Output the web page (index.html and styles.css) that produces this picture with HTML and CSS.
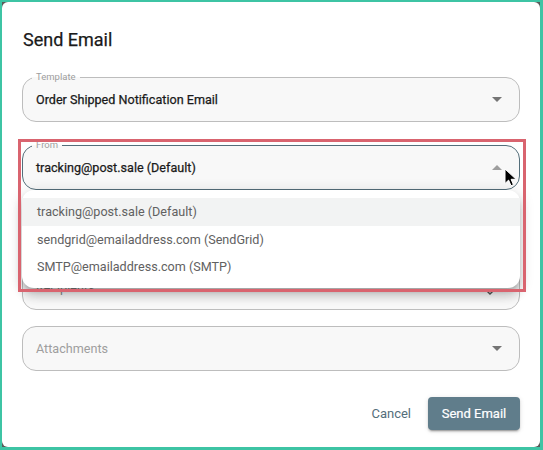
FILE: index.html
```html
<!DOCTYPE html>
<html>
<head>
<meta charset="utf-8">
<link rel="stylesheet" href="styles.css">
</head>
<body>
<div class="frame">
  <div class="dialog">
    <h1 class="title">Send Email</h1>

    <div class="field field-template">
      <span class="label">Template</span>
      <span class="value">Order Shipped Notification Email</span>
      <svg class="arrow" width="10" height="5" viewBox="0 0 10 5"><path d="M0 0h10L5 5z" fill="#757575"/></svg>
    </div>

    <div class="field field-from focused">
      <span class="label">From</span>
      <span class="value">tracking@post.sale (Default)</span>
      <svg class="arrow" width="10" height="5" viewBox="0 0 10 5"><path d="M0 5h10L5 0z" fill="#9e9e9e"/></svg>
    </div>

    <div class="field field-to"></div>

    <div class="field field-recipient">
      <span class="placeholder">Recipients</span>
      <svg class="unfold" width="16" height="16" viewBox="0 0 24 24"><path d="M12 5.83 15.17 9l1.41-1.41L12 3 7.41 7.59 8.83 9zm0 12.34L8.83 15l-1.41 1.41L12 21l4.59-4.59L15.17 15z" fill="#555"/></svg>
    </div>

    <div class="field field-attach">
      <span class="placeholder">Attachments</span>
      <svg class="arrow" width="10" height="5" viewBox="0 0 10 5"><path d="M0 0h10L5 5z" fill="#757575"/></svg>
    </div>

    <div class="actions">
      <button class="btn btn-text">Cancel</button>
      <button class="btn btn-primary">Send Email</button>
    </div>

    <ul class="menu">
      <li class="menu-item active">tracking@post.sale (Default)</li>
      <li class="menu-item">sendgrid@emailaddress.com (SendGrid)</li>
      <li class="menu-item">SMTP@emailaddress.com (SMTP)</li>
    </ul>

    <div class="highlight"></div>

    <svg class="cursor" width="13" height="19" viewBox="0 0 13 19"><path d="M1 1v14.5l3.6-3.4 2.4 5.6 2.4-1-2.3-5.4h5z" fill="#000" stroke="#fff" stroke-width="1" stroke-linejoin="round"/></svg>
  </div>
</div>
</body>
</html>
```

FILE: styles.css
```css
* { box-sizing: border-box; }
html, body { margin: 0; padding: 0; }
body {
  width: 543px;
  height: 450px;
  font-family: Roboto, "Noto Sans", sans-serif;
  background: #555;
}
.frame {
  width: 543px;
  height: 450px;
  border-style: solid;
  border-color: #3dc4a4;
  border-width: 2px 3px 3px 2px;
  background: #5a5a5a;
}
.dialog {
  position: relative;
  height: 100%;
  background: #fff;
  border-radius: 6px;
  padding: 26px 20px 17px 20px;
  display: flex;
  flex-direction: column;
}
.title {
  margin: 0;
  font-size: 18px;
  line-height: 24px;
  font-weight: 400;
  color: #1a1a1a;
  padding-left: 1px;
  -webkit-text-stroke: 0.25px #1a1a1a;
}
.field {
  position: relative;
  height: 45px;
  border: 1px solid #bdbdbd;
  border-radius: 14px;
  background: #f8f8f8;
  display: flex;
  align-items: center;
  padding: 0 13px 0 13px;
  flex: none;
}
.field-template { margin-top: 25px; }
.field-from { margin-top: 23px; }
.field-to { margin-top: 16px; }
.field-recipient { margin-top: 14px; }
.field-attach { margin-top: 16px; }
.focused { border-color: #546e7a; }
.label {
  position: absolute;
  top: -7px;
  left: 9px;
  padding: 0 4px;
  font-size: 9.5px;
  line-height: 12px;
  color: #9e9e9e;
  background: linear-gradient(#fff 0 50%, #f8f8f8 50% 100%);
}
.value {
  flex: 1;
  font-size: 12.6px;
  font-weight: 400;
  color: #1a1a1a;
  -webkit-text-stroke: 0.25px #1a1a1a;
}
.placeholder {
  flex: 1;
  font-size: 12.6px;
  color: #9e9e9e;
}
.field-recipient .placeholder { color: #888; }
.arrow { flex: none; margin-right: 4px; }
.unfold { flex: none; margin-right: 8px; margin-top: 2px; }
.actions {
  margin-top: 26px;
  display: flex;
  justify-content: flex-end;
  align-items: center;
  gap: 9px;
}
.btn {
  font-family: Roboto, "Noto Sans", sans-serif;
  font-size: 13px;
  font-weight: 400;
  border: none;
  cursor: pointer;
}
.btn-text {
  background: none;
  color: #546e7a;
  padding: 8px 8px;
}
.btn-primary {
  width: 92px;
  height: 33px;
  background: #607d8b;
  color: #fff;
  border-radius: 4px;
  -webkit-text-stroke: 0.2px #fff;
  box-shadow: 0 3px 1px -2px rgba(0,0,0,.2), 0 2px 2px 0 rgba(0,0,0,.14), 0 1px 5px 0 rgba(0,0,0,.12);
}
.menu {
  position: absolute;
  top: 188px;
  left: 20px;
  width: 498px;
  margin: 0;
  padding: 8px 0 7px 0;
  list-style: none;
  background: #fff;
  border-radius: 12px;
  box-shadow: 0 5px 5px -3px rgba(0,0,0,.2), 0 8px 10px 1px rgba(0,0,0,.14), 0 3px 14px 2px rgba(0,0,0,.12);
}
.menu-item {
  height: 27.5px;
  display: flex;
  align-items: center;
  padding-left: 15px;
  font-size: 12.6px;
  color: #616161;
}
.menu-item.active { background: #f2f3f3; }
.highlight {
  position: absolute;
  top: 137px;
  left: 16px;
  width: 508px;
  height: 153px;
  border: 3px solid #d9646f;
}
.cursor {
  position: absolute;
  top: 166px;
  left: 502px;
}
```
